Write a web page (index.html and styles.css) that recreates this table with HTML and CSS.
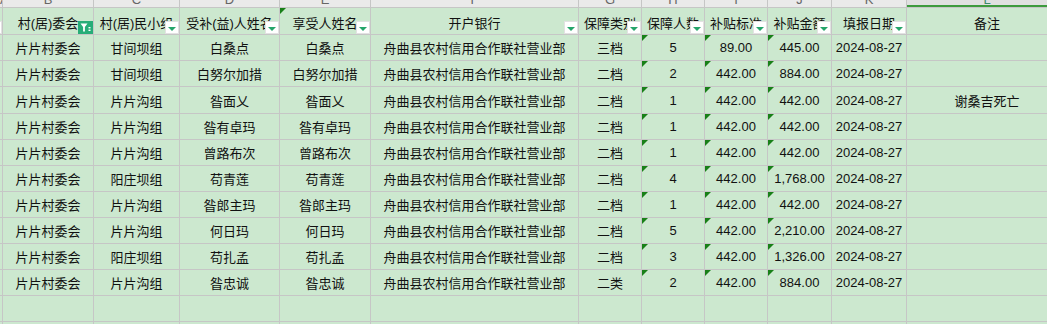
FILE: index.html
```html
<!DOCTYPE html>
<html lang="zh-CN">
<head>
<meta charset="utf-8">
<link rel="stylesheet" href="styles.css">
</head>
<body>
<div class="sheet">
  <!-- column letters strip -->
  <div class="cl"><span>A</span></div>
  <div class="cl"><span>B</span></div>
  <div class="cl"><span>C</span></div>
  <div class="cl"><span>D</span></div>
  <div class="cl"><span>E</span></div>
  <div class="cl"><span>F</span></div>
  <div class="cl"><span>G</span></div>
  <div class="cl"><span>H</span></div>
  <div class="cl"><span>I</span></div>
  <div class="cl"><span>J</span></div>
  <div class="cl"><span>K</span></div>
  <div class="cl sel"><span>L</span></div>

  <!-- header row -->
  <div class="c h"><i class="dd"></i></div>
  <div class="c h"><span class="tx">村(居)委会</span><i class="fa"><svg width="15" height="13" viewBox="0 0 15 13"><path d="M2.5 2.5h7l-2.6 3.4v4.6h-1.8v-4.6z" fill="#fff"/><rect x="10.5" y="6" width="2" height="1.4" fill="#fff"/><rect x="10.5" y="8.6" width="2" height="1.4" fill="#fff"/></svg></i></div>
  <div class="c h"><span class="tx">村(居)民小组</span><i class="dd"></i></div>
  <div class="c h"><span class="tx">受补(益)人姓名</span><i class="dd"></i></div>
  <div class="c h t"><span class="tx">享受人姓名</span><i class="dd"></i></div>
  <div class="c h"><span class="tx">开户银行</span><i class="dd"></i></div>
  <div class="c h"><span class="tx">保障类别</span><i class="dd"></i></div>
  <div class="c h"><span class="tx">保障人数</span><i class="dd"></i></div>
  <div class="c h"><span class="tx">补贴标准</span><i class="dd"></i></div>
  <div class="c h"><span class="tx">补贴金额</span><i class="dd"></i></div>
  <div class="c h"><span class="tx">填报日期</span><i class="dd"></i></div>
  <div class="c h"><span class="tx">备注</span></div>

  <!-- row 1 -->
  <div class="c"></div><div class="c">片片村委会</div><div class="c">甘间坝组</div><div class="c">白桑点</div><div class="c">白桑点</div><div class="c">舟曲县农村信用合作联社营业部</div><div class="c">三档</div><div class="c t">5</div><div class="c t">89.00</div><div class="c t">445.00</div><div class="c">2024-08-27</div><div class="c"></div>
  <!-- row 2 -->
  <div class="c"></div><div class="c">片片村委会</div><div class="c">甘间坝组</div><div class="c">白努尔加措</div><div class="c">白努尔加措</div><div class="c">舟曲县农村信用合作联社营业部</div><div class="c">二档</div><div class="c t">2</div><div class="c t">442.00</div><div class="c t">884.00</div><div class="c">2024-08-27</div><div class="c"></div>
  <!-- row 3 -->
  <div class="c"></div><div class="c">片片村委会</div><div class="c">片片沟组</div><div class="c">昝面乂</div><div class="c">昝面乂</div><div class="c">舟曲县农村信用合作联社营业部</div><div class="c">二档</div><div class="c t">1</div><div class="c t">442.00</div><div class="c t">442.00</div><div class="c">2024-08-27</div><div class="c">谢桑吉死亡</div>
  <!-- row 4 -->
  <div class="c"></div><div class="c">片片村委会</div><div class="c">片片沟组</div><div class="c">昝有卓玛</div><div class="c">昝有卓玛</div><div class="c">舟曲县农村信用合作联社营业部</div><div class="c">二档</div><div class="c t">1</div><div class="c t">442.00</div><div class="c t">442.00</div><div class="c">2024-08-27</div><div class="c"></div>
  <!-- row 5 -->
  <div class="c"></div><div class="c">片片村委会</div><div class="c">片片沟组</div><div class="c">曾路布次</div><div class="c">曾路布次</div><div class="c">舟曲县农村信用合作联社营业部</div><div class="c">二档</div><div class="c t">1</div><div class="c t">442.00</div><div class="c t">442.00</div><div class="c">2024-08-27</div><div class="c"></div>
  <!-- row 6 -->
  <div class="c"></div><div class="c">片片村委会</div><div class="c">阳庄坝组</div><div class="c">苟青莲</div><div class="c">苟青莲</div><div class="c">舟曲县农村信用合作联社营业部</div><div class="c">二档</div><div class="c t">4</div><div class="c t">442.00</div><div class="c t">1,768.00</div><div class="c">2024-08-27</div><div class="c"></div>
  <!-- row 7 -->
  <div class="c"></div><div class="c">片片村委会</div><div class="c">片片沟组</div><div class="c">昝郎主玛</div><div class="c">昝郎主玛</div><div class="c">舟曲县农村信用合作联社营业部</div><div class="c">二档</div><div class="c t">1</div><div class="c t">442.00</div><div class="c t">442.00</div><div class="c">2024-08-27</div><div class="c"></div>
  <!-- row 8 -->
  <div class="c"></div><div class="c">片片村委会</div><div class="c">片片沟组</div><div class="c">何日玛</div><div class="c">何日玛</div><div class="c">舟曲县农村信用合作联社营业部</div><div class="c">二档</div><div class="c t">5</div><div class="c t">442.00</div><div class="c t">2,210.00</div><div class="c">2024-08-27</div><div class="c"></div>
  <!-- row 9 -->
  <div class="c"></div><div class="c">片片村委会</div><div class="c">阳庄坝组</div><div class="c">苟扎孟</div><div class="c">苟扎孟</div><div class="c">舟曲县农村信用合作联社营业部</div><div class="c">二档</div><div class="c t">3</div><div class="c t">442.00</div><div class="c t">1,326.00</div><div class="c">2024-08-27</div><div class="c"></div>
  <!-- row 10 -->
  <div class="c"></div><div class="c">片片村委会</div><div class="c">片片沟组</div><div class="c">昝忠诚</div><div class="c">昝忠诚</div><div class="c">舟曲县农村信用合作联社营业部</div><div class="c">二类</div><div class="c t">2</div><div class="c t">442.00</div><div class="c t">884.00</div><div class="c">2024-08-27</div><div class="c"></div>
  <!-- empty rows -->
  <div class="c"></div><div class="c"></div><div class="c"></div><div class="c"></div><div class="c"></div><div class="c"></div><div class="c"></div><div class="c"></div><div class="c"></div><div class="c"></div><div class="c"></div><div class="c"></div>
  <div class="c"></div><div class="c"></div><div class="c"></div><div class="c"></div><div class="c"></div><div class="c"></div><div class="c"></div><div class="c"></div><div class="c"></div><div class="c"></div><div class="c"></div><div class="c"></div>
</div>
</body>
</html>
```

FILE: styles.css
```css
html, body {
  margin: 0;
  padding: 0;
  overflow: hidden;
  background: #cce8cf;
}
body {
  width: 1047px;
  height: 324px;
}
.sheet {
  display: grid;
  grid-template-columns: 2px 90px 85px 99px 90px 207px 62px 62px 62px 63px 74px 160px;
  grid-template-rows: 7px 26px 25px 25px 26px 25px 25px 25px 25px 25px 25px 25px 25px 25px;
  gap: 1px;
  background: #c6c6c6;
  font-family: "Liberation Sans", "Noto Sans CJK SC", sans-serif;
  font-size: 13px;
  color: #111;
}
.cl {
  background: #eaeaea;
  overflow: hidden;
  text-align: center;
  color: #666;
  font-size: 13px;
}
.cl span {
  display: block;
  line-height: 13px;
  margin-top: -7px;
}
.cl.sel {
  background: #e0e0e0;
  box-shadow: inset 0 -2px 0 #3d9a3d;
  color: #3d8a6a;
}
.c {
  background: #cce8cf;
  display: flex;
  align-items: center;
  justify-content: center;
  white-space: nowrap;
  overflow: hidden;
  position: relative;
}
.c.h {
  padding-top: 2px;
  box-sizing: border-box;
}
.tx {
  display: block;
}
.t::before {
  content: "";
  position: absolute;
  left: 0;
  top: 0;
  border-top: 6px solid #188018;
  border-right: 6px solid transparent;
}
.dd {
  position: absolute;
  right: 0;
  bottom: 0;
  width: 14px;
  height: 13px;
  background: #fff;
  box-shadow: inset 0 0 0 1px #e2e2e2;
}
.dd::after {
  content: "";
  position: absolute;
  left: 3px;
  top: 6px;
  border-top: 4px solid #25a56a;
  border-left: 4px solid transparent;
  border-right: 4px solid transparent;
}
.fa {
  position: absolute;
  right: 0;
  bottom: 0;
  width: 15px;
  height: 13px;
  background: #27ad78;
  display: block;
}
.fa svg {
  display: block;
}
```
